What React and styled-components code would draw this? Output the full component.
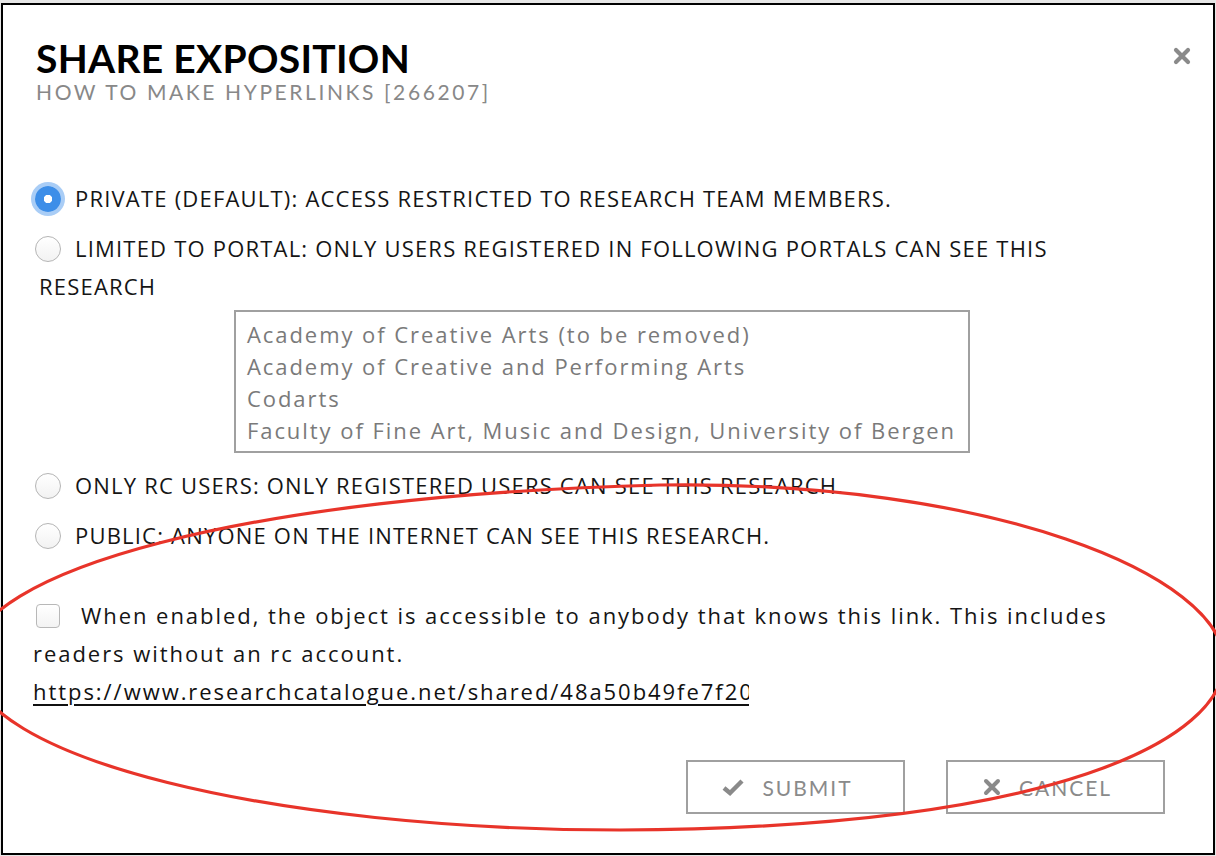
import React from "react";
import styled, { createGlobalStyle } from "styled-components";

const portals = [
    "Academy of Creative Arts (to be removed)",
    "Academy of Creative and Performing Arts",
    "Codarts",
    "Faculty of Fine Art, Music and Design, University of Bergen",
];

const options = [
    { id: "private", label: "PRIVATE (DEFAULT): ACCESS RESTRICTED TO RESEARCH TEAM MEMBERS.", checked: true },
    { id: "portal", label: "LIMITED TO PORTAL: ONLY USERS REGISTERED IN FOLLOWING PORTALS CAN SEE THIS RESEARCH", portals: true },
    { id: "rc", label: "ONLY RC USERS: ONLY REGISTERED USERS CAN SEE THIS RESEARCH." },
    { id: "public", label: "PUBLIC: ANYONE ON THE INTERNET CAN SEE THIS RESEARCH." },
];

const GlobalStyle = createGlobalStyle`
    html, body {
        margin: 0;
        padding: 0;
        background: #e6e6e6;
    }
    body {
        font-family: "Open Sans", Lato, sans-serif;
    }
`;

const App = () => {
    return (
        <Page>
            <GlobalStyle/>
            <Dialog>
                <CloseButton aria-label="close">
                    <svg width="18" height="18" viewBox="0 0 18 18">
                        <path d="M3 3 L15 15 M15 3 L3 15" stroke="#8a8a8a" strokeWidth="4.2" strokeLinecap="round"/>
                    </svg>
                </CloseButton>

                <Header>
                    <Title>SHARE EXPOSITION</Title>
                    <Subtitle>HOW TO MAKE HYPERLINKS [266207]</Subtitle>
                </Header>

                <Options>
                    {options.map((option) => (
                        <React.Fragment key={option.id}>
                            <OptionLabel>
                                <Radio checked={option.checked}/>
                                {option.label}
                            </OptionLabel>
                            {option.portals && (
                                <PortalList>
                                    {portals.map((portal) => (
                                        <PortalItem key={portal}>{portal}</PortalItem>
                                    ))}
                                </PortalList>
                            )}
                        </React.Fragment>
                    ))}
                </Options>

                <ShareBlock>
                    <ShareText>
                        <Checkbox/>
                        When enabled, the object is accessible to anybody that knows this link. This includes
                        readers without an rc account.
                    </ShareText>
                    <ShareLink>https://www.researchcatalogue.net/shared/48a50b49fe7f20</ShareLink>
                </ShareBlock>

                <Footer>
                    <Button>
                        <svg width="22" height="18" viewBox="0 0 22 18">
                            <path d="M2 10 L8 15 L20 3" fill="none" stroke="#8a8a8a" strokeWidth="4.4"/>
                        </svg>
                        SUBMIT
                    </Button>
                    <Button>
                        <svg width="18" height="18" viewBox="0 0 18 18">
                            <path d="M3 3 L15 15 M15 3 L3 15" stroke="#8a8a8a" strokeWidth="4" strokeLinecap="round"/>
                        </svg>
                        CANCEL
                    </Button>
                </Footer>
            </Dialog>

            <Annotation viewBox="0 0 1216 856" width="1216" height="856">
                <path
                    d="M -30 660 C -30 570 250 495 660 485 C 990 480 1224 575 1224 662 C 1224 738 1060 828 620 830 C 280 830 -30 760 -30 660 Z"
                    fill="none"
                    stroke="#e8342a"
                    strokeWidth="3.2"
                />
            </Annotation>
        </Page>
    );
};

export default App;

const Page = styled.div`
    position: relative;
    width: 1216px;
    height: 856px;
    padding: 3px 0 0 1px;
    box-sizing: border-box;
    overflow: hidden;
`;

const Dialog = styled.div`
    position: relative;
    width: 1214px;
    height: 852px;
    box-sizing: border-box;
    border: 2px solid #000;
    background: #fff;
    padding: 0 48px 0 30px;
    color: #151515;
`;

const CloseButton = styled.button`
    position: absolute;
    top: 42px;
    right: 22px;
    background: none;
    border: none;
    padding: 0;
    cursor: pointer;
    line-height: 0;
`;

const Header = styled.div`
    padding: 31px 0 0 3px;
`;

const Title = styled.h1`
    margin: 0;
    font-family: Lato, sans-serif;
    font-size: 39px;
    line-height: 44px;
    font-weight: 700;
    color: #000;
    letter-spacing: 0.3px;
`;

const Subtitle = styled.h2`
    margin: -3px 0 0;
    font-family: Lato, sans-serif;
    font-size: 21px;
    line-height: 30px;
    font-weight: 400;
    color: #888;
    letter-spacing: 2.6px;
`;

const Options = styled.div`
    margin-top: 72px;
    padding-left: 6px;
`;

const OptionLabel = styled.label`
    display: block;
    margin-bottom: 12px;
    font-size: 22px;
    line-height: 38px;
    letter-spacing: 1.2px;
    color: #151515;
`;

const Radio = styled.span`
    position: relative;
    display: inline-block;
    vertical-align: middle;
    width: 26px;
    height: 26px;
    margin: -4px 14px 0 -4px;
    box-sizing: border-box;
    border-radius: 50%;
    border: ${(p) => (p.checked ? "none" : "1px solid #b5b5b5")};
    background: ${(p) => (p.checked ? "radial-gradient(circle, #fff 0 4px, #3d8ee8 4.5px)" : "linear-gradient(#fff, #f2f2f2)")};
    box-shadow: ${(p) => (p.checked ? "0 0 0 4px #a9cdf6" : "none")};
`;

const PortalList = styled.div`
    width: fit-content;
    margin: -7px auto 13px;
    padding: 6px 12px 5px 11px;
    border: 2px solid #a0a0a0;
    color: #7a7a7a;
    font-size: 22px;
    line-height: 32px;
    letter-spacing: 1.95px;
`;

const PortalItem = styled.div``;

const ShareBlock = styled.div`
    margin-top: 42px;
    font-size: 22px;
    line-height: 38px;
    letter-spacing: 1.95px;
`;

const ShareText = styled.p`
    margin: 0;
`;

const Checkbox = styled.span`
    display: inline-block;
    vertical-align: middle;
    width: 24px;
    height: 24px;
    margin: -4px 21px 0 3px;
    box-sizing: border-box;
    border: 1px solid #b8b8b8;
    border-radius: 4px;
    background: linear-gradient(#fff, #f3f3f3);
`;

const ShareLink = styled.a`
    display: block;
    width: 716px;
    overflow: hidden;
    white-space: nowrap;
    color: #111;
    text-decoration: underline;
    text-underline-offset: 4px;
`;

const Footer = styled.div`
    display: flex;
    justify-content: flex-end;
    gap: 41px;
    margin-top: 50px;
`;

const Button = styled.button`
    display: flex;
    align-items: center;
    justify-content: center;
    gap: 18px;
    width: 219px;
    height: 54px;
    padding: 0 16px 0 0;
    box-sizing: border-box;
    background: #fff;
    border: 2px solid #a0a0a0;
    color: #8a8a8a;
    font-family: Lato, sans-serif;
    font-size: 21px;
    letter-spacing: 2px;
    cursor: pointer;
`;

const Annotation = styled.svg`
    position: absolute;
    left: 0;
    top: 0;
    pointer-events: none;
`;
